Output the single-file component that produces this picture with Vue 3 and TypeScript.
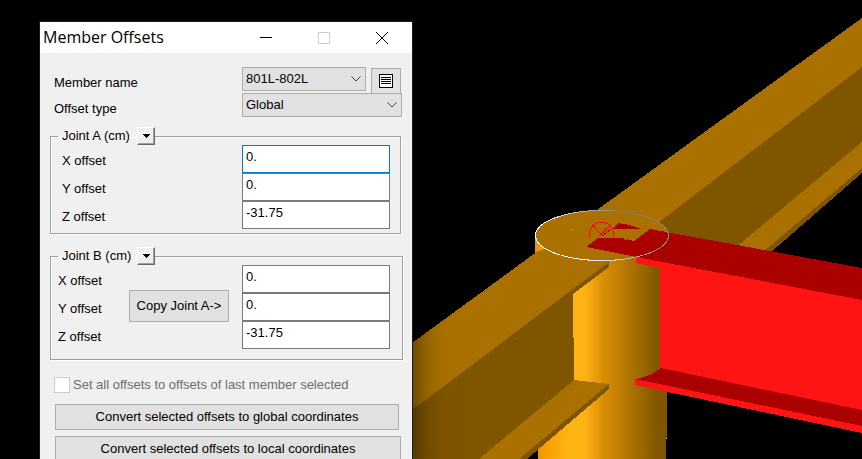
<script setup lang="ts">
import { onMounted, ref } from 'vue'

interface Joint {
  id: string
  title: string
  offsets: { axis: string; value: string }[]
}

const members = ['801L-802L']
const offsetTypes = ['Global', 'Local']
const member = ref('801L-802L')
const offsetType = ref('Global')
const setAll = ref(false)

const joints = ref<Joint[]>([
  {
    id: 'a',
    title: 'Joint A (cm)',
    offsets: [
      { axis: 'X', value: '0.' },
      { axis: 'Y', value: '0.' },
      { axis: 'Z', value: '-31.75' },
    ],
  },
  {
    id: 'b',
    title: 'Joint B (cm)',
    offsets: [
      { axis: 'X', value: '0.' },
      { axis: 'Y', value: '0.' },
      { axis: 'Z', value: '-31.75' },
    ],
  },
])

function copyJointA() {
  joints.value[1].offsets = joints.value[0].offsets.map((o) => ({ ...o }))
}

onMounted(() => {
  const first = document.getElementById('a-X') as HTMLInputElement | null
  first?.focus()
  first?.setSelectionRange(first.value.length, first.value.length)
})
</script>

<template>
  <main class="viewport">
    <svg class="scene" viewBox="0 0 862 459" preserveAspectRatio="xMinYMin slice" shape-rendering="crispEdges" aria-hidden="true">
      <defs>
        <linearGradient id="column" gradientUnits="userSpaceOnUse" x1="535" y1="0" x2="667" y2="0">
          <stop offset="0" stop-color="#e89400" />
          <stop offset="0.1" stop-color="#f9a002" />
          <stop offset="0.26" stop-color="#ffb515" />
          <stop offset="0.38" stop-color="#ffb215" />
          <stop offset="0.52" stop-color="#d98d04" />
          <stop offset="0.76" stop-color="#a66e00" />
          <stop offset="0.93" stop-color="#815600" />
          <stop offset="1" stop-color="#7f5500" />
        </linearGradient>
        <linearGradient id="rim" gradientUnits="userSpaceOnUse" x1="575" y1="258" x2="620" y2="212">
          <stop offset="0" stop-color="#ffffff" />
          <stop offset="0.45" stop-color="#c8c8c8" />
          <stop offset="1" stop-color="#808080" />
        </linearGradient>
      </defs>

      <!-- rear beam -->
      <path fill="#aa7100" d="M862 18 L590 215 L590 250 L640 250 L862 67Z" />
      <path fill="#7f5500" d="M862 67 L650 229 L660 245 L738 246 L862 142Z" />
      <path fill="#aa7100" d="M862 142 L735 248 L763 254 L862 168Z" />
      <path fill="#7f5500" d="M862 168 L763 252 L770 253 L862 173Z" />

      <!-- column -->
      <path fill="url(#column)" d="M535 236 H667 V438 H666 V459 H538 V262 H535Z" />

      <!-- front beam -->
      <path fill="#aa7100" d="M412 343 L538 251 L560 245 L609 256 L609 262 L412 410Z" />
      <path fill="#7f5500" d="M412 410 L609 262 V267 L573 294 L574 380 L479 459 H412Z" />
      <path fill="#aa7100" d="M574 380 L609 384 L520 459 H479Z" />
      <path fill="#7f5500" d="M609 384 V389 L527 459 H519Z" />
      <path fill="#aa7100" d="M502 348h1v1h-1zM515 338h1v1h-1z" />

      <!-- column cap -->
      <ellipse cx="602" cy="235.5" rx="66.5" ry="25" fill="#aa7100" />

      <!-- selected beam -->
      <path fill="#ff1414" d="M636 257 L862 299 V411 L660 369 V268 L636 263Z" />
      <path fill="#aa0000" d="M586 247 L598 238 H622 L634 241 L650 229 L862 268 V300 L636 257Z" />
      <path fill="#aa0000" d="M612 229 L618 223 L630 225 L641 229Z" />
      <path fill="#aa0000" d="M661 368 L862 410 V427 L635 380 L652 374Z" />
      <path fill="#ff1414" d="M635 379 L862 426 V433 L635 385Z" />

      <ellipse cx="602" cy="235.5" rx="66.5" ry="25" fill="none" stroke="url(#rim)" />
      <path fill="none" stroke="#ff0000" d="M589.5 237 V234 A12 12 0 0 1 613.5 234 V237 M593 226 L603 236 M610 226 L599 236" />
      <path fill="none" stroke="#aa0000" d="M611 229 L602 236" />
      <path fill="#ffb515" d="M572 229h1v1h-1zM625 239h1v1h-1zM666 438h1v1h-1z" />
    </svg>

    <section class="dialog" role="dialog" aria-labelledby="dialog-title">
      <header class="titlebar">
        <h1 id="dialog-title">Member Offsets</h1>
        <button type="button" class="caption" aria-label="Minimize">
          <svg width="12" height="12" viewBox="0 0 12 12"><path d="M0 5.5H12" /></svg>
        </button>
        <button type="button" class="caption" aria-label="Maximize" disabled>
          <svg width="12" height="12" viewBox="0 0 12 12"><path d="M.5 .5H11.5V11.5H.5Z" /></svg>
        </button>
        <button type="button" class="caption" aria-label="Close">
          <svg width="12" height="12" viewBox="0 0 12 12"><path d="M0 0L12 12M12 0L0 12" /></svg>
        </button>
      </header>

      <form class="body" @submit.prevent>
        <div class="row member-row">
          <label for="member">Member name</label>
          <span class="combo">
            <select id="member" v-model="member">
              <option v-for="m in members" :key="m">{{ m }}</option>
            </select>
            <svg width="10" height="6" viewBox="0 0 10 6"><path d="M.5 .5L5 5L9.5 .5" /></svg>
          </span>
          <button type="button" class="push list" aria-label="Member list">
            <svg width="16" height="16" viewBox="0 0 16 16" shape-rendering="crispEdges">
              <path fill="#fff" stroke="#000" d="M1.5 1.5H14.5V14.5H1.5Z" />
              <path stroke="#000" d="M3 4.5H13M3 6.5H13M3 8.5H13M3 10.5H13" />
            </svg>
          </button>
        </div>
        <div class="row">
          <label for="type">Offset type</label>
          <span class="combo">
            <select id="type" v-model="offsetType">
              <option v-for="t in offsetTypes" :key="t">{{ t }}</option>
            </select>
            <svg width="10" height="6" viewBox="0 0 10 6"><path d="M.5 .5L5 5L9.5 .5" /></svg>
          </span>
        </div>

        <fieldset v-for="joint in joints" :key="joint.id" :class="['joint', 'joint-' + joint.id]">
          <legend>
            <span>{{ joint.title }}</span>
            <button type="button" class="drop" :aria-label="joint.title + ' options'">
              <svg width="7" height="4" viewBox="0 0 7 4" shape-rendering="crispEdges"><path d="M0 0H7V1H6V2H5V3H4V4H3V3H2V2H1V1H0Z" /></svg>
            </button>
          </legend>
          <div class="fields">
            <div class="names">
              <label v-for="o in joint.offsets" :key="o.axis" :for="joint.id + '-' + o.axis">{{ o.axis }} offset</label>
            </div>
            <button v-if="joint.id === 'b'" type="button" class="push copy" @click="copyJointA">Copy Joint A-&gt;</button>
            <div class="values">
              <input v-for="o in joint.offsets" :id="joint.id + '-' + o.axis" :key="o.axis" v-model="o.value" type="text" />
            </div>
          </div>
        </fieldset>

        <label class="check">
          <input v-model="setAll" type="checkbox" disabled />
          <span>Set all offsets to offsets of last member selected</span>
        </label>

        <div class="actions">
          <button type="button" class="push global">Convert selected offsets to global coordinates</button>
          <button type="button" class="push">Convert selected offsets to local coordinates</button>
        </div>
      </form>
    </section>
  </main>
</template>

<style>
body {
  margin: 0;
  background: #000;
}
</style>

<style scoped>
.viewport {
  position: relative;
  height: 100vh;
  overflow: hidden;
  background: #000;
  color: #000;
  font: 13px/16px "Liberation Sans", Arial, sans-serif;
}

.viewport *,
.viewport *::before {
  box-sizing: border-box;
}

.scene {
  position: absolute;
  inset: 0;
  width: 100%;
  height: 100%;
}

.dialog {
  position: absolute;
  left: 40px;
  top: 22px;
  width: 372px;
  background: #f0f0f0;
  box-shadow: 0 0 0 1px #1c1c1c, 0 8px 32px rgba(0, 0, 0, 0.7);
}

.titlebar {
  display: flex;
  align-items: stretch;
  height: 31px;
  padding-right: 1px;
  background: #fff;
}

h1 {
  flex: 1;
  margin: 0;
  padding-left: 3px;
  font: 16px/31px "Open Sans", "Noto Sans", sans-serif;
}

button,
input,
select {
  font: inherit;
  color: inherit;
  border-radius: 0;
}

.caption {
  display: grid;
  place-items: center;
  width: 58px;
  padding: 0;
  border: 0;
  background: none;
}

.caption svg {
  fill: none;
  stroke: #000;
}

.caption:disabled svg {
  stroke: #ccc;
}

.body {
  padding: 14px 9px 12px 10px;
}

.row {
  display: flex;
  align-items: flex-start;
  height: 24px;
  padding-left: 4px;
}

.row label {
  width: 188px;
  padding-top: 8px;
}

.member-row {
  height: 26px;
}

.combo {
  display: flex;
  position: relative;
  width: 160px;
  height: 24px;
}

.member-row .combo {
  width: 124px;
}

.combo select {
  appearance: none;
  width: 100%;
  padding: 0 20px 0 3px;
  border: 1px solid #adadad;
  background: #e1e1e1;
}

.combo svg {
  position: absolute;
  right: 5px;
  top: 9px;
  fill: none;
  stroke: #404040;
  pointer-events: none;
}

.push {
  padding: 0;
  border: 1px solid #adadad;
  background: #e1e1e1;
}

.list {
  display: grid;
  place-items: center;
  width: 30px;
  height: 26px;
  margin: 1px 0 0 5px;
}

.joint {
  min-width: 0;
  margin: 10px 2px 0 0;
  padding: 0 10px 4px 0;
  border: 1px solid #a0a0a0;
  box-shadow: 1px 1px 0 #fff, inset 1px 1px 0 #fff;
}

.joint-b {
  margin: 13px 0 0;
  padding: 0 12px 10px 0;
}

legend {
  display: flex;
  align-items: center;
  height: 18px;
  margin-left: 7px;
  padding: 0 0 0 4px;
}

legend span {
  width: 75px;
  white-space: nowrap;
}

.drop {
  display: grid;
  place-items: center;
  width: 18px;
  height: 18px;
  padding: 0;
  border: 1px solid;
  border-color: #fff #696969 #696969 #fff;
  background: #f0f0f0;
  box-shadow: inset -1px -1px 0 #a0a0a0;
}

.fields {
  display: flex;
  align-items: flex-start;
}

.names {
  display: grid;
  flex: 1;
  height: 84px;
  padding: 2px 0 0 11px;
}

.joint-b .names {
  padding-left: 7px;
}

.names label {
  line-height: 28px;
}

.copy {
  width: 100px;
  height: 32px;
  margin: 25px 13px 0 0;
}

.values {
  display: grid;
  width: 148px;
}

.values input {
  width: 100%;
  height: 28px;
  padding: 0 3px 5px;
  border: 1px solid #7a7a7a;
  outline: 0;
  background: #fff;
}

.values input:focus {
  border-color: #0078d7;
}

.check {
  display: flex;
  align-items: center;
  gap: 3px;
  margin-top: 17px;
  padding-left: 4px;
  color: #6d6d6d;
}

.check input {
  appearance: none;
  width: 16px;
  height: 16px;
  margin: 0;
  border: 1px solid #ccc;
  background: #fff;
}

.actions {
  display: grid;
  gap: 6px;
  margin-top: 11px;
  padding: 0 2px 0 5px;
}

.actions .push {
  height: 26px;
}

.actions .global {
  margin-right: 2px;
}
</style>
